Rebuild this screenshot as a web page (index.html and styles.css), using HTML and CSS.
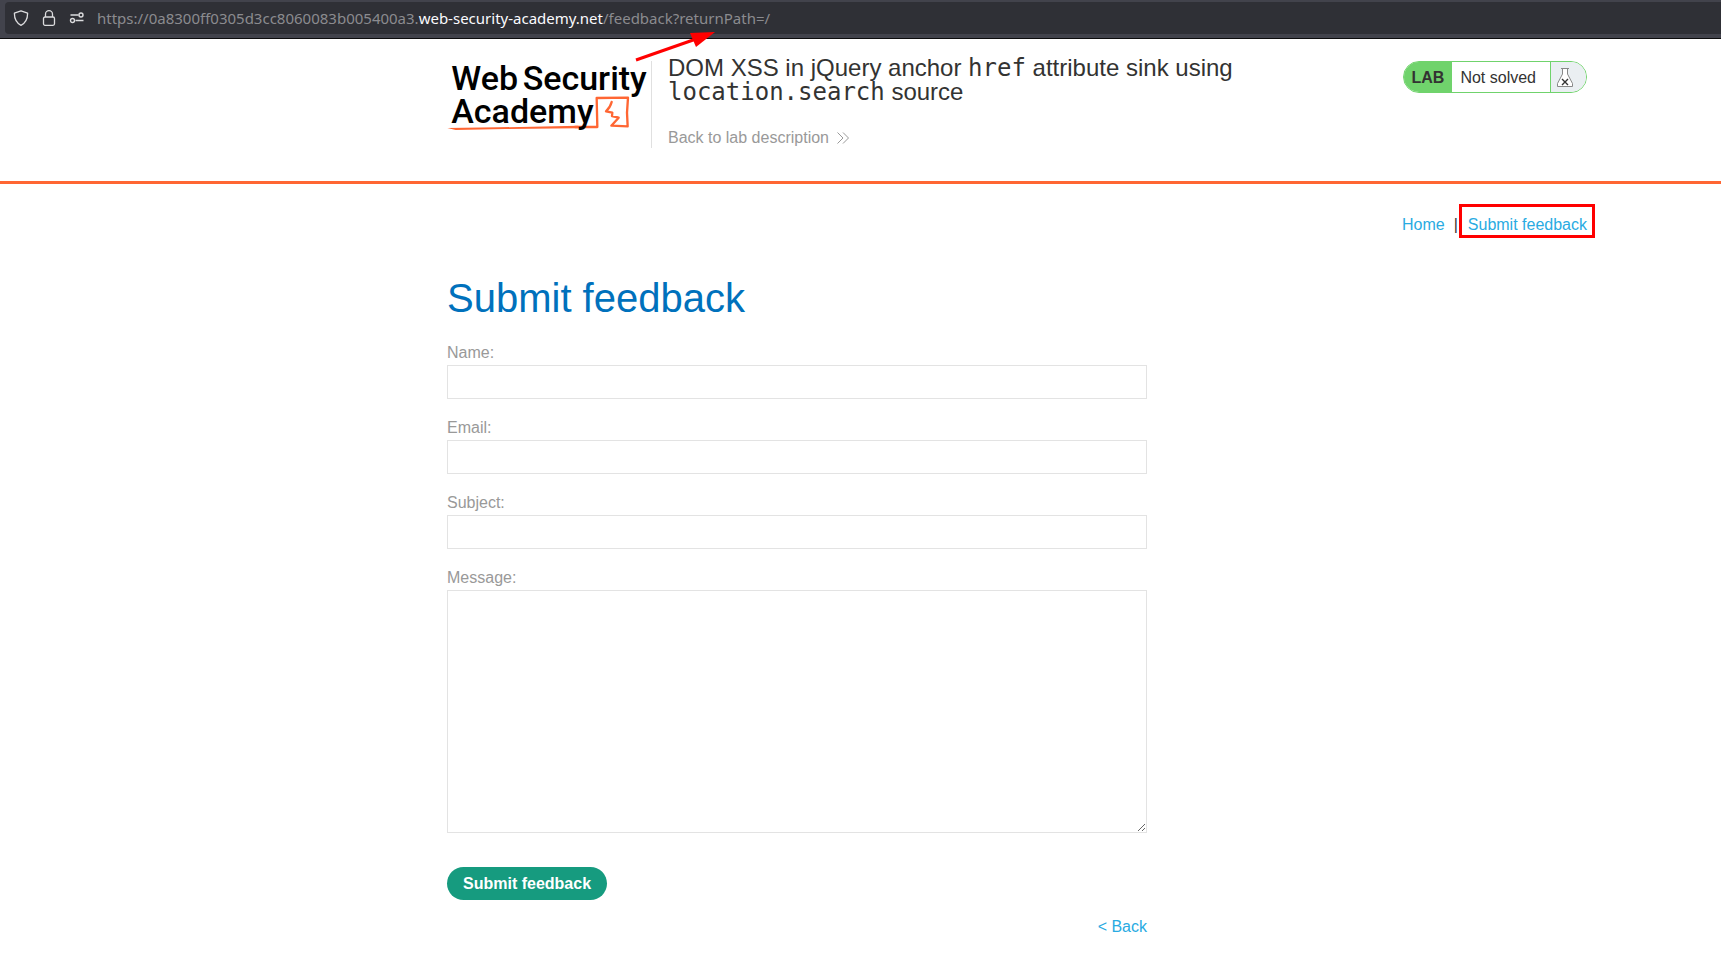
FILE: index.html
```html
<!DOCTYPE html>
<html lang="en">
<head>
<meta charset="utf-8">
<title>DOM XSS in jQuery anchor href attribute sink using location.search source</title>
<link rel="stylesheet" href="styles.css">
</head>
<body>
<div class="toolbar">
  <div class="urlbar">
    <svg class="urlbar-icon" viewBox="0 0 16 16" width="16" height="16" fill="none" stroke="#dcdcde" stroke-width="1.3" stroke-linejoin="round"><path d="M8 .8 14.6 3.2C14.7 8.500 13 12.800 8 15.400 3 12.800 1.300 8.500 1.400 3.200Z"/></svg>
    <svg class="urlbar-icon" viewBox="0 0 16 16" width="16" height="16" fill="none" stroke="#dcdcde" stroke-width="1.3"><rect x="2.500" y="7" width="11" height="8.300" rx="1.500"/><path d="M4.500 7V4.200a3.500 3.500 0 0 1 7 0V7"/></svg>
    <svg class="urlbar-icon" viewBox="0 0 16 16" width="16" height="16" fill="none" stroke="#dcdcde" stroke-width="1.400"><path d="M1.500 5H9.500M6.500 10.500H14.500"/><circle cx="12" cy="5" r="2"/><circle cx="3.500" cy="10.500" r="2"/></svg>
    <span class="url">https://0a8300ff0305d3cc8060083b005400a3.<span class="url-domain">web-security-academy.net</span>/feedback?returnPath=/</span>
  </div>
</div>

<header class="lab-header">
  <a class="logo" href="#" aria-label="Web Security Academy">
    <svg viewBox="36 45 612 216" width="204" height="72">
      <g fill="none" stroke="#ff6633" stroke-linejoin="round" stroke-linecap="round">
        <path stroke-width="7" d="M420 243 487 243 485 156 579 155 576 200 578 241 529 239 551 215 531 210 532 200 513 196 Q526 184 530 168"/>
      </g>
      <path fill="#ff6633" d="M37 246 190 244 430 239 430 247 210 249 62 252 Z"/>
      <g class="logo-text">
        <text x="49" y="131">Web</text>
        <text x="263" y="131">Security</text>
        <text x="49" y="231">Academy</text>
      </g>
    </svg>
  </a>
  <div class="title-block">
    <h2 class="lab-title">DOM XSS in jQuery anchor <code>href</code> attribute sink using <code>location.search</code> source</h2>
    <a class="lab-back" href="#">Back to lab description
      <svg viewBox="0 0 12 12" width="12" height="12" fill="none" stroke="#999" stroke-width="1"><path d="M.5.500 6 6 .5 11.500M6 .5 11.500 6 6 11.500"/></svg>
    </a>
  </div>
  <div class="lab-status">
    <span class="lab-tag">LAB</span>
    <span class="lab-state">Not solved</span>
    <span class="lab-flask">
      <svg viewBox="0 0 18 21" width="18" height="21"><path fill="#fff" stroke="#888" d="M6.500 1.500V7L1.500 16.500V19.500H16.500V16.500L11.500 7V1.500"/><path stroke="#888" d="M5 1.500H13"/><path stroke="#333" stroke-width="1.400" d="M6 12 12 18M12 12 6 18"/></svg>
    </span>
  </div>
  <svg class="arrow" viewBox="0 0 84 34" width="84" height="34"><path stroke="#f00" stroke-width="3" d="M2 30 62 9"/><path fill="#f00" d="M81 2 56 3 62 17Z"/></svg>
</header>

<main class="page">
  <nav class="top-links">
    <a href="#">Home</a><span>|</span><a class="marked" href="#">Submit feedback</a>
  </nav>
  <h1>Submit feedback</h1>
  <form class="feedback">
    <label for="name">Name:</label>
    <input id="name" type="text">
    <label for="email">Email:</label>
    <input id="email" type="email">
    <label for="subject">Subject:</label>
    <input id="subject" type="text">
    <label for="message">Message:</label>
    <textarea id="message"></textarea>
    <button type="submit">Submit feedback</button>
    <a class="back" href="#">&lt; Back</a>
  </form>
</main>
</body>
</html>
```
FILE: styles.css
```css
* { box-sizing: border-box; }

body {
  margin: 0;
  background: #fff;
  color: #333332;
  font: 16px/20px "Liberation Sans", Arial, sans-serif;
}

a { color: #29abe2; text-decoration: none; }
svg { display: block; }

.toolbar {
  padding: 2px 0 4px 5px;
  background: #42434c;
  border-bottom: 1px solid #0c0c0d;
}

.urlbar {
  display: flex;
  align-items: center;
  gap: 12px;
  height: 32px;
  padding-left: 8px;
  background: #2f3036;
  border-radius: 4px 0 0 4px;
}

.urlbar-icon { flex: none; }

.url {
  color: #8b8b8f;
  font: 15px/20px "Noto Sans", sans-serif;
  white-space: nowrap;
}

.url-domain { color: #fbfbfe; }

.lab-header {
  position: relative;
  display: flex;
  align-items: flex-start;
  padding: 22px 134px 33px 447px;
  border-bottom: 3px solid #ff6633;
}

.logo { flex: none; }
.logo svg { overflow: visible; }

.logo-text {
  fill: #000;
  font: 500 102px Roboto, sans-serif;
}

.title-block {
  flex: 1;
  min-height: 87px;
  padding-left: 16px;
  border-left: 1px solid #e0e0e0;
}

.lab-title {
  max-width: 640px;
  margin: -5px 0 24px;
  font-size: 24px;
  font-weight: 400;
  line-height: 24px;
}

.lab-title code { font-family: "DejaVu Sans Mono", monospace; }

.lab-back {
  display: inline-flex;
  align-items: center;
  gap: 8px;
  color: #999;
}

.lab-status {
  display: flex;
  flex: none;
  height: 32px;
  line-height: 32px;
  overflow: hidden;
  border: 1px solid #70d36c;
  border-radius: 16px;
}

.lab-tag {
  padding: 0 8px;
  background: #70d36c;
  font-weight: 700;
}

.lab-state { padding: 0 14px 0 8px; }

.lab-flask {
  display: flex;
  align-items: center;
  height: 30px;
  padding: 0 12px 0 5px;
  background: #eaeff2;
  border-left: 1px solid #70d36c;
}

.arrow {
  position: absolute;
  left: 634px;
  top: -9px;
}

.page { padding: 20px 134px 24px 447px; }

.top-links {
  display: flex;
  justify-content: flex-end;
  align-items: baseline;
  margin-right: -8px;
}

.top-links span { padding: 0 1px 0 9px; }

.marked {
  padding: 8px 5px 0 6px;
  border: 3px solid #f00;
}

h1 {
  margin: 36px 0 21px;
  color: #0071bc;
  font-size: 40px;
  font-weight: 400;
  line-height: 48px;
}

.feedback {
  display: flex;
  flex-direction: column;
  max-width: 700px;
}

.feedback label {
  padding-bottom: 2px;
  color: #999;
}

.feedback input,
.feedback textarea {
  height: 34px;
  margin: 0 0 19px;
  padding: 4px 8px;
  background: #fff;
  border: 1px solid #e3e3e3;
  border-radius: 0;
  font: inherit;
}

.feedback textarea {
  height: 243px;
  margin-bottom: 34px;
}

.feedback button {
  align-self: flex-start;
  height: 33px;
  padding: 0 16px;
  color: #fff;
  background: #169b7f;
  border: 0;
  border-radius: 17px;
  font: inherit;
  font-weight: 700;
}

.back {
  align-self: flex-end;
  margin-top: 17px;
}
```
